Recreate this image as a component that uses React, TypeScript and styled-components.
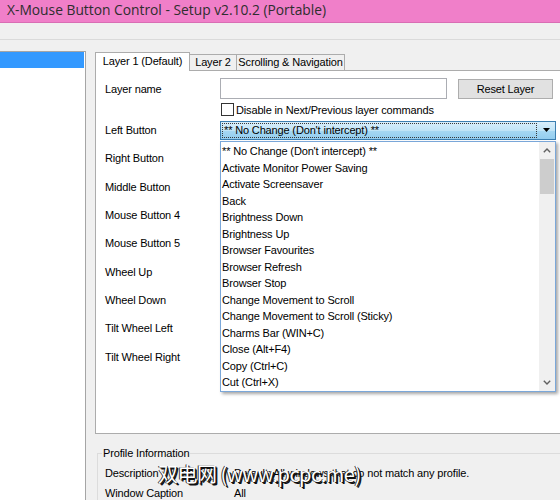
import React from 'react';
import styled, { createGlobalStyle } from 'styled-components';

const GlobalStyle = createGlobalStyle`
  html, body {
    margin: 0;
    padding: 0;
    background: #f0f0f0;
  }
  body {
    font-family: "Liberation Sans", Arial, sans-serif;
  }
`;

const buttonLabels = [
  'Left Button',
  'Right Button',
  'Middle Button',
  'Mouse Button 4',
  'Mouse Button 5',
  'Wheel Up',
  'Wheel Down',
  'Tilt Wheel Left',
  'Tilt Wheel Right',
];

const actions = [
  "** No Change (Don't intercept) **",
  'Activate Monitor Power Saving',
  'Activate Screensaver',
  'Back',
  'Brightness Down',
  'Brightness Up',
  'Browser Favourites',
  'Browser Refresh',
  'Browser Stop',
  'Change Movement to Scroll',
  'Change Movement to Scroll (Sticky)',
  'Charms Bar (WIN+C)',
  'Close (Alt+F4)',
  'Copy (Ctrl+C)',
  'Cut (Ctrl+X)',
];

const Chevron: React.FC<{ up?: boolean }> = ({ up }) => (
  <svg width="8" height="5" viewBox="0 0 8 5">
    <path
      d={up ? 'M0.8 4.2 L4 1 L7.2 4.2' : 'M0.8 0.8 L4 4 L7.2 0.8'}
      fill="none"
      stroke="#606060"
      strokeWidth="1.4"
    />
  </svg>
);

const App: React.FC = () => {
  return (
    <>
      <GlobalStyle />
      <Window>
        <TitleBar>X-Mouse Button Control - Setup v2.10.2 (Portable)</TitleBar>
        <MenuStrip />
        <Body>
          <AppList>
            <AppItem $selected />
          </AppList>
          <Main>
            <TabStrip>
              <Tab $active $width={95}>Layer 1 (Default)</Tab>
              <Tab $width={48}>Layer 2</Tab>
              <Tab $width={109}>Scrolling &amp; Navigation</Tab>
            </TabStrip>
            <TabPanel>
              <LayerRow>
                <Label>Layer name</Label>
                <TextInput />
                <PushButton type="button">Reset Layer</PushButton>
              </LayerRow>
              <CheckRow>
                <CheckBox />
                <span>Disable in Next/Previous layer commands</span>
              </CheckRow>
              {buttonLabels.map((name, i) => (
                <ButtonRow key={name}>
                  <Label>{name}</Label>
                  {i === 0 && (
                    <Combo>
                      <ComboText>{actions[0]}</ComboText>
                      <ComboArrow>
                        <svg width="7" height="4" viewBox="0 0 7 4">
                          <path d="M0 0 H7 L3.5 4 Z" fill="#000" />
                        </svg>
                      </ComboArrow>
                    </Combo>
                  )}
                </ButtonRow>
              ))}
              <DropList>
                <Items>
                  {actions.map((a) => (
                    <Item key={a}>{a}</Item>
                  ))}
                </Items>
                <ScrollBar>
                  <ScrollArrow>
                    <Chevron up />
                  </ScrollArrow>
                  <Track>
                    <Thumb />
                  </Track>
                  <ScrollArrow>
                    <Chevron />
                  </ScrollArrow>
                </ScrollBar>
              </DropList>
            </TabPanel>
            <GroupBox>
              <Legend>Profile Information</Legend>
              <InfoRow>
                <span>Description</span>
                <span>Default: All windows that do not match any profile.</span>
              </InfoRow>
              <InfoRow>
                <span>Window Caption</span>
                <span>All</span>
              </InfoRow>
            </GroupBox>
          </Main>
        </Body>
        <Watermark>双电网 (www.pcpc.me)</Watermark>
      </Window>
    </>
  );
};

export default App;

// Styled Components

const Window = styled.div`
  position: relative;
  width: 560px;
  height: 500px;
  overflow: hidden;
  background: #f0f0f0;
  display: flex;
  flex-direction: column;
  font-size: 11px;
  letter-spacing: -0.15px;
  color: #000;
`;

const TitleBar = styled.div`
  flex-shrink: 0;
  height: 22px;
  padding-left: 7px;
  background: #f07fc9;
  border-bottom: 1px solid #d96db4;
  font-family: "Open Sans", "Liberation Sans", sans-serif;
  font-size: 13.8px;
  line-height: 20px;
  letter-spacing: 0;
  color: #2e2e2e;
  white-space: nowrap;
`;

const MenuStrip = styled.div`
  flex-shrink: 0;
  height: 16px;
  border-bottom: 1px solid #dadada;
`;

const Body = styled.div`
  flex: 1;
  min-height: 0;
  display: flex;
  gap: 9px;
  padding-top: 11px;
`;

const AppList = styled.div`
  flex-shrink: 0;
  box-sizing: border-box;
  width: 88px;
  margin-left: -2px;
  padding: 0 1px;
  background: #fff;
  border: 1px solid #a5a5a5;
  border-bottom: none;
`;

const AppItem = styled.div<{ $selected?: boolean }>`
  height: 16px;
  background: ${(p) => (p.$selected ? '#3399ff' : 'transparent')};
`;

const Main = styled.div`
  flex: 1;
  min-width: 0;
  display: flex;
  flex-direction: column;
`;

const TabStrip = styled.div`
  position: relative;
  z-index: 1;
  display: flex;
  align-items: flex-end;
  height: 18px;
  margin-top: 1px;
`;

const Tab = styled.div<{ $active?: boolean; $width: number }>`
  position: relative;
  z-index: ${(p) => (p.$active ? 2 : 1)};
  box-sizing: border-box;
  width: ${(p) => p.$width}px;
  height: ${(p) => (p.$active ? 19 : 16)}px;
  margin-left: -1px;
  margin-bottom: ${(p) => (p.$active ? -1 : 0)}px;
  border: 1px solid #acacac;
  border-bottom: none;
  background: ${(p) => (p.$active ? '#fff' : '#f0f0f0')};
  line-height: ${(p) => (p.$active ? 16 : 15)}px;
  text-align: center;
  white-space: nowrap;

  &:first-child {
    margin-left: 0;
  }
`;

const TabPanel = styled.div`
  position: relative;
  box-sizing: border-box;
  width: 480px;
  height: 364px;
  flex-shrink: 0;
  padding: 7px 0 0 9px;
  background: #fff;
  border: 1px solid #acacac;
  display: flex;
  flex-direction: column;
`;

const Label = styled.span`
  white-space: nowrap;
`;

const LayerRow = styled.div`
  display: grid;
  grid-template-columns: 115px 227px 106px;
  align-items: center;
  height: 21px;
`;

const TextInput = styled.div`
  box-sizing: border-box;
  height: 21px;
  background: #fff;
  border: 1px solid #abadb3;
`;

const PushButton = styled.button`
  box-sizing: border-box;
  height: 20px;
  margin-left: 11px;
  padding: 0;
  background: #e1e1e1;
  border: 1px solid #adadad;
  font: inherit;
  letter-spacing: inherit;
  color: #000;
`;

const CheckRow = styled.div`
  display: flex;
  align-items: center;
  gap: 2px;
  height: 13px;
  margin: 4px 0 0 116px;
  white-space: nowrap;
`;

const CheckBox = styled.div`
  box-sizing: border-box;
  width: 13px;
  height: 13px;
  background: #fff;
  border: 1px solid #333;
`;

const ButtonRow = styled.div`
  display: grid;
  grid-template-columns: 115px 336px;
  align-items: center;
  height: 28.3px;
`;

const Combo = styled.div`
  box-sizing: border-box;
  display: flex;
  align-items: stretch;
  height: 19px;
  padding: 1px 0 1px 1px;
  border: 1px solid #3c7fb1;
  background: linear-gradient(#d9eefb, #c0e4f7 50%, #a6d8f3 51%, #93cdef);
`;

const ComboText = styled.div`
  flex: 1;
  box-sizing: border-box;
  padding-left: 1px;
  border: 1px dotted #3a3a3a;
  line-height: 13px;
  white-space: nowrap;
  overflow: hidden;
`;

const ComboArrow = styled.div`
  width: 18px;
  display: flex;
  align-items: center;
  justify-content: center;
`;

const DropList = styled.div`
  position: absolute;
  left: 124px;
  top: 70px;
  box-sizing: border-box;
  width: 336px;
  height: 251px;
  display: flex;
  background: #fff;
  border: 1px solid #7aa7d9;
  box-shadow: 2px 2px 3px rgba(0, 0, 0, 0.35);
  overflow: hidden;
`;

const Items = styled.div`
  flex: 1;
  padding: 1px 0 0 1px;
`;

const Item = styled.div`
  height: 16.5px;
  line-height: 16.5px;
  white-space: nowrap;
`;

const ScrollBar = styled.div`
  width: 16px;
  display: flex;
  flex-direction: column;
  background: #f0f0f0;
`;

const ScrollArrow = styled.div`
  height: 17px;
  display: flex;
  align-items: center;
  justify-content: center;
`;

const Track = styled.div`
  flex: 1;
  padding: 0 1px;
`;

const Thumb = styled.div`
  height: 35px;
  background: #cdcdcd;
`;

const GroupBox = styled.fieldset`
  min-width: 0;
  margin: 13px 0 0 2px;
  padding: 3px 0 0 7px;
  border: 1px solid #dcdcdc;
  border-right: none;
  border-bottom: none;
`;

const Legend = styled.legend`
  margin-left: -3px;
  padding: 0 1px;
  line-height: 13px;
`;

const InfoRow = styled.div`
  display: grid;
  grid-template-columns: 129px 1fr;
  height: 20px;
  align-items: center;
  white-space: nowrap;
`;

const Watermark = styled.div`
  position: absolute;
  left: 158px;
  top: 462px;
  font-family: "Noto Sans CJK SC", "Noto Sans", sans-serif;
  font-size: 20px;
  line-height: 24px;
  letter-spacing: -0.5px;
  color: #fff;
  text-shadow: 1px 1px 0 #111, 2px 2px 0 #111, -1px 0 0 #333;
  white-space: nowrap;
`;
